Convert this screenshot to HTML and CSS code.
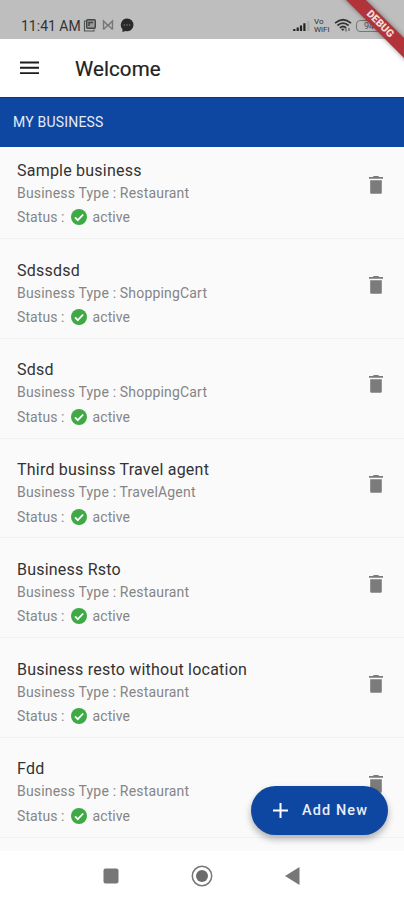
FILE: index.html
```
<!DOCTYPE html>
<html lang="en">
<head>
<meta charset="utf-8">
<title>Welcome</title>
<link rel="stylesheet" href="styles.css">
</head>
<body>
<svg class="defs" width="0" height="0">
  <symbol id="trash" viewBox="0 0 14 18"><path d="M1.200 4.200h11.600v12.600a1 1 0 0 1-1 1H2.200a1 1 0 0 1-1-1zM0 1.100h3.800L4.800 0h4.400l1 1.100H14v1.600H0z"/></symbol>
  <symbol id="check" viewBox="0 0 16 16"><circle cx="8" cy="8" r="8" fill="#3fa945"/><path d="M4 8.300l2.800 2.800 5.400-5.600" fill="none" stroke="#fff" stroke-width="1.800"/></symbol>
</svg>
<div class="screen">
  <header class="status-bar">
    <span class="time">11:41 AM</span>
    <svg class="notices" width="52" height="16" viewBox="0 0 52 16">
      <path d="M3 4H1.500v10H11v-1.500" fill="none" stroke="#555" stroke-width="1.200"/>
      <rect x="3.700" y="2.700" width="8.600" height="8.600" rx="1" fill="#999" stroke="#444" stroke-width="1.400"/>
      <path d="M6 9V5.500h4" fill="none" stroke="#444" stroke-width="1.500"/>
      <path d="M20.500 12.500V4l4.500 4.500L29.500 4v8.500M20.500 12.500l4-4M29.500 12.500l-4-4" fill="none" stroke="#777" stroke-width="1.400"/>
      <path d="M44 1.500a6.400 6.400 0 1 1-1.500 12.600L39.500 15v-2.800A6.400 6.400 0 0 1 44 1.500z" fill="#292929"/>
      <path d="M40.500 8h1.500m1.200 0h1.500m1.200 0h1.500" stroke="#666" stroke-width="1.300"/>
    </svg>
    <span class="spacer"></span>
    <svg class="signal" width="18" height="12" viewBox="0 0 18 12"><path d="M1.300 9v2M4.700 7.500V11M8 5.500V11M11.400 3.200V11" stroke="#222" stroke-width="2.200"/><path d="M15.300 1v10" stroke="#aaa" stroke-width="2.200"/></svg>
    <span class="vowifi">Vo<br>WiFi</span>
    <svg class="wifi" width="18" height="15" viewBox="0 0 18 15"><path d="M1 5.200Q9-1.700 17 5.200M3.400 7.500Q9 2.800 14.600 7.500M5.800 9.800Q9 7.200 12.200 9.800" fill="none" stroke="#333" stroke-width="1.700"/><path d="M6.800 10.800h4L8.800 13z" fill="#333"/><path d="M12 13.500v-3M15 10v3" stroke="#444"/></svg>
    <span class="battery">94</span>
  </header>
  <div class="debug">DEBUG</div>
  <nav class="app-bar">
    <svg width="20" height="14" viewBox="0 0 20 14"><path d="M0 1.500h19M0 6.800h19M0 12.100h19" stroke="#1c1c1c" stroke-width="1.900"/></svg>
    <h1>Welcome</h1>
  </nav>
  <div class="section">MY BUSINESS</div>
  <main class="list">
    <article class="row"><div class="info"><h2>Sample business</h2><p class="type">Business Type : Restaurant</p><p class="status">Status : <svg><use href="#check"/></svg>active</p></div><svg class="trash"><use href="#trash"/></svg></article>
    <article class="row"><div class="info"><h2>Sdssdsd</h2><p class="type">Business Type : ShoppingCart</p><p class="status">Status : <svg><use href="#check"/></svg>active</p></div><svg class="trash"><use href="#trash"/></svg></article>
    <article class="row"><div class="info"><h2>Sdsd</h2><p class="type">Business Type : ShoppingCart</p><p class="status">Status : <svg><use href="#check"/></svg>active</p></div><svg class="trash"><use href="#trash"/></svg></article>
    <article class="row"><div class="info"><h2>Third businss Travel agent</h2><p class="type">Business Type : TravelAgent</p><p class="status">Status : <svg><use href="#check"/></svg>active</p></div><svg class="trash"><use href="#trash"/></svg></article>
    <article class="row"><div class="info"><h2>Business Rsto</h2><p class="type">Business Type : Restaurant</p><p class="status">Status : <svg><use href="#check"/></svg>active</p></div><svg class="trash"><use href="#trash"/></svg></article>
    <article class="row"><div class="info"><h2>Business resto without location</h2><p class="type">Business Type : Restaurant</p><p class="status">Status : <svg><use href="#check"/></svg>active</p></div><svg class="trash"><use href="#trash"/></svg></article>
    <article class="row"><div class="info"><h2>Fdd</h2><p class="type">Business Type : Restaurant</p><p class="status">Status : <svg><use href="#check"/></svg>active</p></div><svg class="trash"><use href="#trash"/></svg></article>
  </main>
  <button class="fab"><svg width="15" height="15" viewBox="0 0 15 15"><path d="M7.500 0v15M0 7.500h15" stroke="#fff" stroke-width="2"/></svg>Add New</button>
  <footer class="nav-bar">
    <svg width="16" height="16" viewBox="0 0 16 16"><rect x=".5" y=".5" width="15" height="15" rx="2" fill="#777"/></svg>
    <svg width="22" height="22" viewBox="0 0 22 22"><circle cx="11" cy="11" r="9.700" fill="none" stroke="#777" stroke-width="1.500"/><circle cx="11" cy="11" r="6" fill="#6c6c6c"/></svg>
    <svg width="15" height="18" viewBox="0 0 15 18"><path d="M14.500 0v18L0 9z" fill="#777"/></svg>
  </footer>
</div>
</body>
</html>
```
FILE: styles.css
```
* { box-sizing: border-box; }
body { margin: 0; font-family: Roboto, sans-serif; }
h1, h2, p { margin: 0; font-weight: 400; }
svg { display: block; flex: none; }
.defs { position: absolute; }
.screen { position: relative; width: 404px; height: 900px; overflow: hidden; background: #fafafa; display: flex; flex-direction: column; }
.status-bar { height: 39px; flex: none; background: #bebebe; display: flex; align-items: flex-start; padding: 17px 17px 0 21px; color: #333; }
.time { font-size: 14px; line-height: 18px; width: 62px; white-space: nowrap; }
.spacer { flex: 1; }
.signal { margin: 3px 3px 0 0; }
.vowifi { font-size: 8px; line-height: 7.500px; width: 17px; margin: 1px 3px 0 0; }
.wifi { margin: 1px 4px 0 0; }
.battery { width: 31px; height: 12px; border: 1px solid #777; border-radius: 4px; font-size: 9px; line-height: 10px; padding-left: 7px; margin: 3px 0 0; color: #555; }
.debug { position: absolute; left: 329.500px; top: 17px; width: 100px; height: 14px; line-height: 14px; background: #b1343a; color: #f4dada; font-size: 10.500px; font-weight: 900; text-align: center; transform: rotate(45deg); box-shadow: 0 0 5px rgba(0,0,0,.4); }
.app-bar { height: 58px; flex: none; background: #fff; display: flex; align-items: center; padding: 0 0 0 20px; gap: 35px; }
h1 { font-size: 20.500px; line-height: 24px; padding-top: 2px; color: #222; letter-spacing: .1px; -webkit-text-stroke: .2px #222; }
.section { height: 50px; flex: none; background: #0d47a1; border-top: 1px solid #083783; color: #e5ebf6; font-size: 14px; line-height: 49px; padding-left: 13px; letter-spacing: .2px; }
.list { flex: none; height: 704px; overflow: hidden; }
.row { height: 99.800px; display: flex; justify-content: space-between; padding: 20.500px 21px 0 17px; border-bottom: 1px solid #f1f1f1; }
.row:first-child { height: 92px; padding-top: 12.700px; }
h2 { font-size: 16px; line-height: 22px; color: #333; letter-spacing: .22px; white-space: nowrap; }
.type, .status { font-size: 14px; line-height: 24px; color: #858585; letter-spacing: .18px; white-space: nowrap; }
.type { line-height: 23.500px; }
.status { display: flex; align-items: center; letter-spacing: .08px; }
.status svg { width: 16px; height: 16px; margin: 0 6px; }
.trash { width: 14px; height: 18px; fill: #7b7b7b; margin-top: 16.200px; }
.fab { position: absolute; left: 251px; top: 786px; width: 137px; height: 49px; border: 0; border-radius: 25px; background: #0d47a1; color: #e8eefa; display: flex; align-items: center; gap: 14px; padding: 0 0 0 22px; font: 500 14.500px Roboto, sans-serif; letter-spacing: 1.100px; box-shadow: 0 4px 7px rgba(0,0,0,.3); white-space: nowrap; }
.nav-bar { flex: none; height: 49px; background: #fff; display: flex; align-items: center; padding-left: 103px; gap: 72px; }
```
